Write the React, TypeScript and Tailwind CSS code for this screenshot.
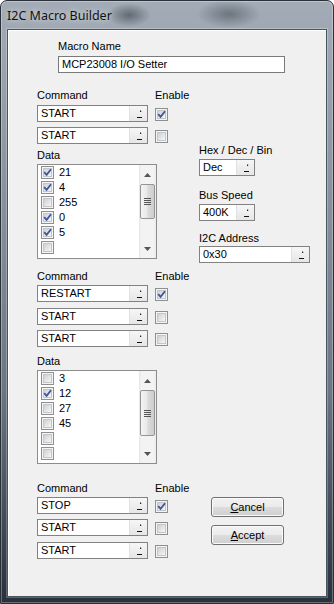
import React from "react";

type Item = { t: string; c?: boolean };

function Check({ checked }: { checked?: boolean }) {
  return (
    <div className="relative h-[13px] w-[13px] shrink-0 border border-[#8e8f8f] bg-[#f4f4f4] p-[1px]">
      <div className="h-full w-full border border-[#c3c6ca] bg-[linear-gradient(135deg,#cdd0d5,#f6f6f6)]" />
      {checked && (
        <svg
          className="absolute left-[0px] top-[0px]"
          width="11"
          height="11"
          viewBox="0 0 11 11"
        >
          <path d="M2.2 5.2 L4.6 7.8 L9 2.2" fill="none" stroke="#3b5796" strokeWidth="1.8" />
        </svg>
      )}
    </div>
  );
}

function Combo({ value, className }: { value: string; className: string }) {
  return (
    <div className={`flex h-[17px] shrink-0 border border-[#828282] bg-white ${className}`}>
      <div className="flex-1 overflow-hidden whitespace-nowrap pl-[3px] text-[11px] leading-[15px]">
        {value}
      </div>
      <div className="h-full w-[18px] border-l border-[#e0e0e0] bg-[linear-gradient(#f6f6f6,#e6e6e6)]">
        <svg width="17" height="15" viewBox="0 0 17 15" className="block">
          <rect x="10" y="4.5" width="1.2" height="1.5" fill="#222" />
          <rect x="7" y="11" width="5" height="1" fill="#111" />
        </svg>
      </div>
    </div>
  );
}

function Header({ className }: { className: string }) {
  return (
    <div className={`flex h-[13px] leading-[13px] ${className}`}>
      <span className="w-[118px]">Command</span>
      <span>Enable</span>
    </div>
  );
}

function ComboRow({
  value,
  checked,
  className,
}: {
  value: string;
  checked?: boolean;
  className: string;
}) {
  return (
    <div className={`flex ${className}`}>
      <Combo value={value} className="w-[111px]" />
      <div className="ml-[7px] mt-[3px]">
        <Check checked={checked} />
      </div>
    </div>
  );
}

function Scrollbar({ thumbClass }: { thumbClass: string }) {
  return (
    <div className="flex w-[17px] flex-col bg-[linear-gradient(90deg,#e6e6e6,#f3f3f3_15%,#f3f3f3_85%,#ebebeb)]">
      <div className="flex h-[17px] items-center justify-center pt-[2px]">
        <svg width="7" height="4" viewBox="0 0 7 4">
          <path d="M0 4 L3.5 0 L7 4 Z" fill="#555" />
        </svg>
      </div>
      <div className="flex-1 px-[1px]">
        <div
          className={`flex flex-col items-center justify-center gap-[1px] rounded-[2px] border border-[#959595] bg-[linear-gradient(90deg,#f4f4f4,#e9e9e9_45%,#dadada_55%,#cecece)] ${thumbClass}`}
        >
          <div className="h-[1px] w-[7px] bg-[#555]" />
          <div className="h-[1px] w-[7px] bg-[#555]" />
          <div className="h-[1px] w-[7px] bg-[#555]" />
          <div className="h-[1px] w-[7px] bg-[#555]" />
        </div>
      </div>
      <div className="flex h-[17px] items-center justify-center pb-[1px]">
        <svg width="7" height="4" viewBox="0 0 7 4">
          <path d="M0 0 L3.5 4 L7 0 Z" fill="#555" />
        </svg>
      </div>
    </div>
  );
}

function CheckList({
  items,
  className,
  thumbClass,
}: {
  items: Item[];
  className: string;
  thumbClass: string;
}) {
  return (
    <div className={`flex w-[120px] border border-[#8c8c8c] bg-white ${className}`}>
      <div className="flex-1 overflow-hidden pl-[3px]">
        {items.map((it, i) => (
          <div key={i} className="flex h-[15px] items-center">
            <Check checked={it.c} />
            <span className="ml-[5px] leading-[15px]">{it.t}</span>
          </div>
        ))}
      </div>
      <Scrollbar thumbClass={thumbClass} />
    </div>
  );
}

function WinButton({ first, rest, className }: { first: string; rest: string; className: string }) {
  return (
    <div
      className={`flex h-[20px] w-[73px] items-center justify-center rounded-[3px] border border-[#707070] bg-[linear-gradient(#f2f2f2_0%,#ebebeb_50%,#dddddd_50%,#cfcfcf_100%)] shadow-[inset_0_0_0_1px_#fbfbfb] text-[11px] leading-[13px] ${className}`}
    >
      <span>
        <span className="underline underline-offset-[1px]">{first}</span>
        {rest}
      </span>
    </div>
  );
}

export default function App() {
  const list1: Item[] = [
    { t: "21", c: true },
    { t: "4", c: true },
    { t: "255" },
    { t: "0", c: true },
    { t: "5", c: true },
    { t: "" },
  ];
  const list2: Item[] = [
    { t: "3" },
    { t: "12", c: true },
    { t: "27" },
    { t: "45" },
    { t: "" },
    { t: "" },
  ];

  return (
    <div className="flex h-[604px] w-[334px] flex-col rounded-t-[7px] border border-[#2a3038] bg-[radial-gradient(ellipse_22px_12px_at_128px_14px,rgba(45,52,62,0.55),transparent),radial-gradient(ellipse_32px_14px_at_228px_13px,rgba(45,52,62,0.45),transparent),linear-gradient(180deg,#a3acb6_0%,#8e98a3_25%,#6b7683_65%,#27303b_100%)] font-['Liberation_Sans',Arial,sans-serif] text-[11px] text-black shadow-[inset_0_0_0_1px_rgba(255,255,255,0.3)]">
      <div className="h-[28px] pl-[6px] pt-[7px]">
        <div className="font-['Noto_Sans',sans-serif] text-[12.5px] leading-[16px] text-[#111] [text-shadow:0_0_6px_rgba(255,255,255,0.8)]">
          I2C Macro Builder
        </div>
      </div>
      <div className="mx-[6px] mb-[6px] flex-1 border border-[#4a5460] bg-[#f0f0f0] shadow-[0_0_0_1px_rgba(255,255,255,0.25),inset_1px_1px_0_#ffffff]">
        <div className="pl-[29px]">
          {/* Macro name */}
          <div className="pl-[21px] pt-[10px]">
            <div className="h-[13px] leading-[13px]">Macro Name</div>
            <div className="mt-[3px] h-[17px] w-[227px] border border-[#7a7a7a] bg-white pl-[3px] leading-[15px]">
              MCP23008 I/O Setter
            </div>
          </div>

          {/* Block 1 + settings */}
          <div className="flex h-[186px] items-start">
            <div className="w-[162px]">
              <Header className="mt-[16px]" />
              <ComboRow value="START" checked className="mt-[3px]" />
              <ComboRow value="START" className="mt-[5px]" />
              <div className="mt-[5px] h-[13px] leading-[13px]">Data</div>
              <CheckList items={list1} className="mt-[2px] h-[95px]" thumbClass="mt-[2px] h-[35px]" />
            </div>
            <div>
              <div className="mt-[71px] h-[13px] leading-[13px]">Hex / Dec / Bin</div>
              <Combo value="Dec" className="mt-[2px] w-[56px]" />
              <div className="mt-[13px] h-[13px] leading-[13px]">Bus Speed</div>
              <Combo value="400K" className="mt-[2px] w-[56px]" />
              <div className="mt-[11px] h-[13px] leading-[13px]">I2C Address</div>
              <Combo value="0x30" className="mt-[1px] w-[111px]" />
            </div>
          </div>

          {/* Block 2 */}
          <div className="w-[162px]">
            <Header className="mt-[11px]" />
            <ComboRow value="RESTART" checked className="mt-[2px]" />
            <ComboRow value="START" className="mt-[6px]" />
            <ComboRow value="START" className="mt-[5px]" />
            <div className="mt-[8px] h-[13px] leading-[13px]">Data</div>
            <CheckList items={list2} className="mt-[2px] h-[94px]" thumbClass="mt-[2px] h-[46px]" />
          </div>

          {/* Block 3 + buttons */}
          <div className="flex">
            <div className="w-[174px]">
              <Header className="mt-[18px]" />
              <ComboRow value="STOP" checked className="mt-[2px]" />
              <ComboRow value="START" className="mt-[5px]" />
              <ComboRow value="START" className="mt-[6px]" />
            </div>
            <div>
              <WinButton first="C" rest="ancel" className="mt-[33px]" />
              <WinButton first="A" rest="ccept" className="mt-[8px]" />
            </div>
          </div>
        </div>
      </div>
    </div>
  );
}
